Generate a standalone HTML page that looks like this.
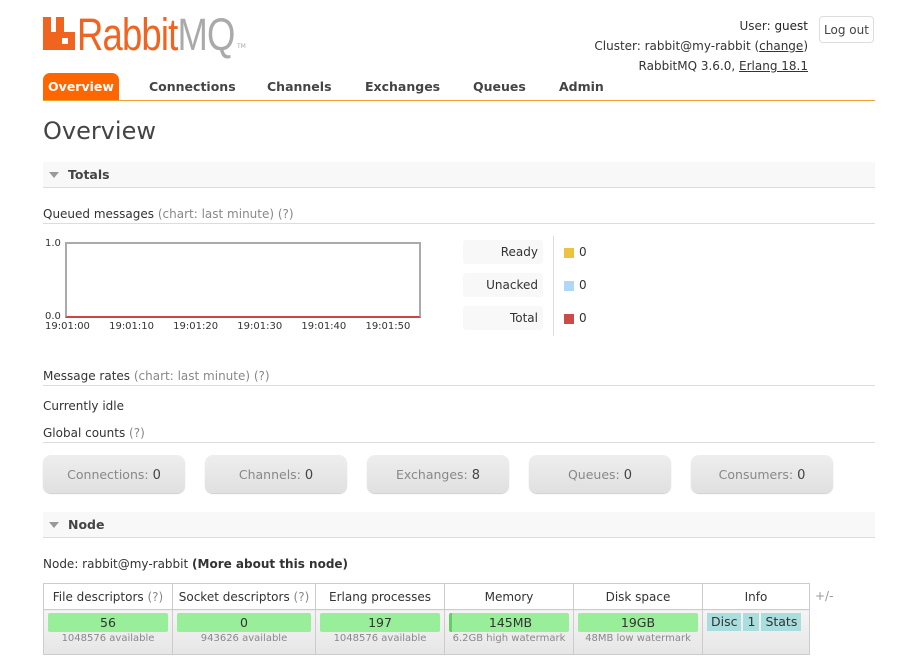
<!DOCTYPE html>
<html><head><meta charset="utf-8"><style>
*{margin:0;padding:0;box-sizing:border-box}
body{width:918px;height:663px;background:#fff;font-family:"DejaVu Sans","Liberation Sans",sans-serif;font-size:12px;color:#333;position:relative;overflow:hidden}
.a{position:absolute;white-space:nowrap}
.g{color:#888}
.tab{position:absolute;top:73px;height:27px;line-height:27px;font-weight:bold;font-size:12.5px;color:#444}
.sec{position:absolute;left:43px;width:832px;height:26px;background:#f8f8f8;border-bottom:1px solid #ddd;font-weight:bold;font-size:12.5px;line-height:25px;padding-left:25px;color:#444}
.sec:before{content:"";position:absolute;left:6px;top:10px;border-left:5px solid transparent;border-right:5px solid transparent;border-top:6px solid #999}
.hr{position:absolute;left:43px;width:832px;border-top:1px solid #ddd}
.t{font-size:12px}
.leg{position:absolute;left:463px;width:80px;height:24px;background:#f8f8f8;border-radius:3px;text-align:right;padding-right:5px;line-height:24px;font-size:12px}
.sq{position:absolute;left:564px;width:10px;height:10px}
.btn{position:absolute;top:455px;width:142px;height:38px;background:linear-gradient(#eee,#e0e0e0);border-radius:8px;text-align:center;line-height:40px;font-size:12.5px;color:#888;box-shadow:0 1px 1px #ccc}
.btn b{color:#444;font-weight:normal;font-size:13px}
table{position:absolute;left:43px;top:583px;border-collapse:collapse;font-size:12px;table-layout:fixed;width:766px}
th{border:1px solid #ccc;height:26px;font-weight:normal;padding:0;background:#fff;white-space:nowrap}
td{border:1px solid #ccc;background:linear-gradient(#f4f4f4,#e6e6e6);vertical-align:top;padding:3px 4px 4px;text-align:center;height:45px}
.bar{background:#99ee99;border-radius:2px;height:19px;line-height:19px;font-size:12.5px}
.sub{font-size:10px;color:#888;line-height:14px;white-space:nowrap}
.inf{display:inline-block;background:#aadddd;padding:0 4px;height:18px;line-height:18px;font-size:12.5px;margin-right:2px}
.ax{font-size:10px;font-family:"DejaVu Sans",sans-serif}
</style></head><body>
<div class="a" style="left:43px;top:17px;width:32px;height:33px">
<svg width="32" height="33" viewBox="0 0 32 33"><path d="M0 0h8v15h5V0h8v15h11v18H0z" fill="#f06420"/><rect x="19" y="21" width="6" height="6" fill="#fff"/></svg></div>
<div class="a" style="left:77px;top:9px;font-family:'Liberation Sans',sans-serif;font-size:45px;color:#f06420;transform:scaleX(0.81);transform-origin:left;letter-spacing:-1px">Rabbit<span style="color:#aaa">MQ</span></div>
<div class="a" style="left:237px;top:43px;font-size:6px;color:#aaa">TM</div>
<div class="a t" style="right:110px;top:16px;text-align:right;line-height:20px">User: <span style="color:#222">guest</span><br>Cluster: rabbit@my-rabbit (<u>change</u>)<br>RabbitMQ 3.6.0, <u>Erlang 18.1</u></div>
<div class="a" style="left:819px;top:16px;width:55px;height:27px;border:1px solid #ddd;border-radius:4px;text-align:center;line-height:26px;font-size:12px;color:#444">Log out</div>
<div class="tab" style="left:43px;width:76px;background:#f60;color:#fff;border-radius:7px 7px 0 0;text-align:center">Overview</div>
<div class="tab" style="left:149px">Connections</div>
<div class="tab" style="left:267px">Channels</div>
<div class="tab" style="left:365px">Exchanges</div>
<div class="tab" style="left:473px">Queues</div>
<div class="tab" style="left:559px">Admin</div>
<div class="a" style="left:43px;top:100px;width:832px;border-top:1px solid #f0a030"></div>
<div class="a" style="left:43px;top:117px;font-size:24px;color:#444">Overview</div>
<div class="sec" style="top:162px">Totals</div>
<div class="a t" style="left:43px;top:207px">Queued messages <span class="g">(chart: last minute) (?)</span></div>
<div class="hr" style="top:223px"></div>
<div class="a ax" style="left:45px;top:238px">1.0</div>
<div class="a ax" style="left:45px;top:311px">0.0</div>
<div class="a" style="left:65px;top:242px;width:356px;height:76px;border:2px solid #aaa;border-bottom:2px solid #c44"></div>
<div class="a ax" style="left:45px;top:321px;word-spacing:16px">19:01:00 19:01:10 19:01:20 19:01:30 19:01:40 19:01:50</div>
<div class="leg" style="top:240px">Ready</div>
<div class="leg" style="top:273px">Unacked</div>
<div class="leg" style="top:306px">Total</div>
<div class="a" style="left:553px;top:236px;height:100px;border-left:1px solid #ddd"></div>
<div class="sq" style="top:248px;background:#edc240"></div><div class="a t" style="left:579px;top:245px">0</div>
<div class="sq" style="top:281px;background:#afd8f8"></div><div class="a t" style="left:579px;top:278px">0</div>
<div class="sq" style="top:314px;background:#cb4b4b"></div><div class="a t" style="left:579px;top:311px">0</div>
<div class="a t" style="left:43px;top:369px">Message rates <span class="g">(chart: last minute) (?)</span></div>
<div class="hr" style="top:385px"></div>
<div class="a t" style="left:43px;top:399px">Currently idle</div>
<div class="a t" style="left:43px;top:426px">Global counts <span class="g">(?)</span></div>
<div class="hr" style="top:442px"></div>
<div class="btn" style="left:43px">Connections: <b>0</b></div>
<div class="btn" style="left:205px">Channels: <b>0</b></div>
<div class="btn" style="left:367px">Exchanges: <b>8</b></div>
<div class="btn" style="left:529px">Queues: <b>0</b></div>
<div class="btn" style="left:691px">Consumers: <b>0</b></div>
<div class="sec" style="top:512px">Node</div>
<div class="a t" style="left:43px;top:557px">Node: rabbit@my-rabbit <b>(More about this node)</b></div>
<table><tr>
<th style="width:129px">File descriptors <span class="g">(?)</span></th>
<th style="width:143px">Socket descriptors <span class="g">(?)</span></th>
<th style="width:129px">Erlang processes</th>
<th style="width:129px">Memory</th>
<th style="width:129px">Disk space</th>
<th style="width:107px">Info</th></tr>
<tr><td><div class="bar">56</div><div class="sub">1048576 available</div></td>
<td><div class="bar">0</div><div class="sub">943626 available</div></td>
<td><div class="bar">197</div><div class="sub">1048576 available</div></td>
<td><div class="bar" style="border-left:3px solid #6c6">145MB</div><div class="sub">6.2GB high watermark</div></td>
<td><div class="bar">19GB</div><div class="sub">48MB low watermark</div></td>
<td style="text-align:left"><span class="inf">Disc</span><span class="inf">1</span><span class="inf">Stats</span></td></tr></table>
<div class="a" style="left:815px;top:589px;font-size:12px;color:#999">+/-</div>
</body></html>
